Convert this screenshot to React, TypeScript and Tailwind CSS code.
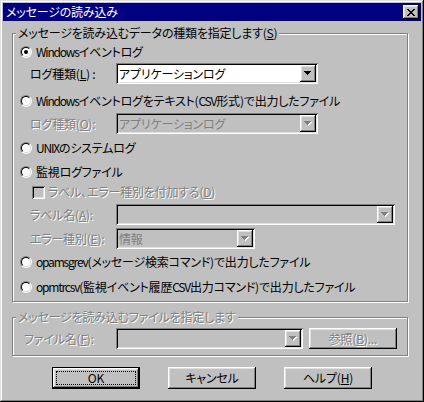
import React from 'react';

const raised =
  'shadow-[inset_-1px_-1px_0_#000,inset_1px_1px_0_#fff,inset_-2px_-2px_0_#808080,inset_2px_2px_0_#dfdfdf]';
const sunken =
  'shadow-[inset_1px_1px_0_#808080,inset_-1px_-1px_0_#fff,inset_2px_2px_0_#000,inset_-2px_-2px_0_#dfdfdf]';
const dim = 'text-[#808080] [text-shadow:1px_1px_0_#fff]';

// latin runs are narrower in the original UI font
function T({ children }: { children: string }) {
  const parts = children.split(/([A-Za-z]+)/);
  return (
    <>
      {parts.map((p, i) =>
        /^[A-Za-z]+$/.test(p) ? (
          <span key={i} className="tracking-[-1.2px]">
            {p}
          </span>
        ) : (
          p
        ),
      )}
    </>
  );
}

function Arrow({ disabled }: { disabled?: boolean }) {
  const rows = [
    [0, 7],
    [1, 5],
    [2, 3],
    [3, 1],
  ];
  return (
    <svg width="8" height="5" shapeRendering="crispEdges">
      {disabled &&
        rows.map(([y, w]) => <rect key={'s' + y} x={y + 1} y={y + 1} width={w} height={1} fill="#fff" />)}
      {rows.map(([y, w]) => (
        <rect key={y} x={y} y={y} width={w} height={1} fill={disabled ? '#808080' : '#000'} />
      ))}
    </svg>
  );
}

function CloseGlyph() {
  const px = [
    [0, 0], [1, 0], [6, 0], [7, 0],
    [1, 1], [2, 1], [5, 1], [6, 1],
    [2, 2], [3, 2], [4, 2], [5, 2],
    [3, 3], [4, 3],
    [2, 4], [3, 4], [4, 4], [5, 4],
    [1, 5], [2, 5], [5, 5], [6, 5],
    [0, 6], [1, 6], [6, 6], [7, 6],
  ];
  return (
    <svg width="8" height="7" shapeRendering="crispEdges">
      {px.map(([x, y]) => (
        <rect key={x + '-' + y} x={x} y={y} width={1} height={1} fill="#000" />
      ))}
    </svg>
  );
}

function Combo({ w, value, disabled }: { w: string; value?: string; disabled?: boolean }) {
  return (
    <div className={`flex h-[21px] p-[2px] ${w} ${disabled ? 'bg-[#c0c0c0]' : 'bg-white'} ${sunken}`}>
      <div
        className={`flex flex-1 items-center overflow-hidden whitespace-nowrap pl-[1px] leading-[14px] ${
          disabled ? 'text-[#808080]' : 'text-black'
        }`}
      >
        {value}
      </div>
      <div className={`flex w-[16px] items-center justify-center bg-[#c0c0c0] ${raised}`}>
        <Arrow disabled={disabled} />
      </div>
    </div>
  );
}

function Radio({ checked }: { checked?: boolean }) {
  return (
    <span className="flex h-[12px] w-[12px] shrink-0 rounded-full border border-t-[#808080] border-l-[#808080] border-b-white border-r-white">
      <span className="flex h-[10px] w-[10px] items-center justify-center rounded-full border border-t-black border-l-black border-b-[#dfdfdf] border-r-[#dfdfdf] bg-white">
        {checked && <span className="h-[4px] w-[4px] rounded-full bg-black" />}
      </span>
    </span>
  );
}

function RadioRow({ label, checked, mt }: { label: string; checked?: boolean; mt: string }) {
  return (
    <div className={`flex h-[16px] items-center gap-[4px] pl-[7px] ${mt}`}>
      <Radio checked={checked} />
      <span className="whitespace-nowrap leading-[14px]">
        <T>{label}</T>
      </span>
    </div>
  );
}

function Group({ label, disabled, className, children }: { label: React.ReactNode; disabled?: boolean; className: string; children: React.ReactNode }) {
  return (
    <div
      className={`relative w-[396px] border border-[#808080] shadow-[1px_1px_0_#fff,inset_1px_1px_0_#fff] ${className}`}
    >
      <span
        className={`absolute -top-[8px] left-[3px] whitespace-nowrap bg-[#c0c0c0] px-[2px] leading-[14px] ${
          disabled ? dim : ''
        }`}
      >
        {label}
      </span>
      {children}
    </div>
  );
}

function Button({ children, isDefault, disabled, w = 'w-[88px]', h = 'h-[22px]' }: { children: React.ReactNode; isDefault?: boolean; disabled?: boolean; w?: string; h?: string }) {
  return (
    <div
      className={`flex ${w} ${h} bg-[#c0c0c0] ${raised} ${isDefault ? 'border border-black p-[3px]' : 'p-[4px]'} ${
        disabled ? dim : ''
      }`}
    >
      <div
        className={`flex flex-1 items-center justify-center leading-[14px] ${
          isDefault ? 'border border-dotted border-black' : ''
        }`}
      >
        {children}
      </div>
    </div>
  );
}

export default function App() {
  return (
    <div className="h-[402px] w-[424px] bg-[#c0c0c0] p-[3px] font-['Noto_Sans_CJK_JP',sans-serif] text-[12px] tracking-[-0.2px] text-black [font-feature-settings:'palt'] shadow-[inset_-1px_-1px_0_#000,inset_1px_1px_0_#dfdfdf,inset_-2px_-2px_0_#808080,inset_2px_2px_0_#fff]">
      {/* title bar */}
      <div className="flex h-[18px] items-center justify-between bg-[#000080] pl-[3px] pr-[2px]">
        <span className="leading-[14px] text-white">メッセージの読み込み</span>
        <div className={`flex h-[14px] w-[16px] items-center justify-center bg-[#c0c0c0] ${raised}`}>
          <CloseGlyph />
        </div>
      </div>

      <div className="flex flex-col px-[9px]">
        <Group
          label={
            <>
              メッセージを読み込むデータの種類を指定します(<u>S</u>)
            </>
          }
          className="mt-[12px] pt-[10px] pb-[6px]"
        >
          <RadioRow label="Windowsイベントログ" checked mt="mt-0" />
          <div className="mt-[3px] flex items-center">
            <span className="ml-[17px] w-[86px] whitespace-nowrap leading-[14px]">
              ログ種類(<u>L</u>) :
            </span>
            <Combo w="w-[202px]" value="アプリケーションログ" />
          </div>

          <RadioRow label="Windowsイベントログをテキスト(CSV形式)で出力したファイル" mt="mt-[9px]" />
          <div className="mt-[4px] flex items-center">
            <span className={`ml-[17px] w-[86px] whitespace-nowrap leading-[14px] ${dim}`}>
              ログ種類(<u>O</u>):
            </span>
            <Combo w="w-[202px]" value="アプリケーションログ" disabled />
          </div>

          <RadioRow label="UNIXのシステムログ" mt="mt-[6px]" />
          <RadioRow label="監視ログファイル" mt="mt-[8px]" />

          <div className="mt-[4px] flex h-[16px] items-center gap-[3px] pl-[19px]">
            <span className={`h-[13px] w-[13px] bg-[#c0c0c0] ${sunken}`} />
            <span className={`whitespace-nowrap leading-[14px] ${dim}`}>
              ラベル、エラー種別を付加する(<u>D</u>)
            </span>
          </div>

          <div className="mt-[4px] flex items-center">
            <span className={`ml-[17px] w-[86px] whitespace-nowrap leading-[14px] ${dim}`}>
              ラベル名(<u>A</u>):
            </span>
            <Combo w="w-[279px]" disabled />
          </div>
          <div className="mt-[3px] flex items-center">
            <span className={`ml-[17px] w-[86px] whitespace-nowrap leading-[14px] ${dim}`}>
              エラー種別(<u>E</u>):
            </span>
            <Combo w="w-[139px]" value="情報" disabled />
          </div>

          <RadioRow label="opamsgrev(メッセージ検索コマンド)で出力したファイル" mt="mt-[5px]" />
          <RadioRow label="opmtrcsv(監視イベント履歴CSV出力コマンド)で出力したファイル" mt="mt-[9px]" />
        </Group>

        <Group label="メッセージを読み込むファイルを指定します" disabled className="mt-[15px] pt-[10px] pb-[6px]">
          <div className="flex items-center">
            <span className={`ml-[11px] w-[92px] whitespace-nowrap leading-[14px] ${dim}`}>
              ファイル名(<u>F</u>):
            </span>
            <Combo w="w-[187px]" disabled />
            <div className="ml-[6px]">
              <Button disabled h="h-[21px]">
                参照(<u>B</u>)...
              </Button>
            </div>
          </div>
        </Group>

        <div className="mt-[11px] flex justify-center gap-[28px]">
          <Button isDefault>OK</Button>
          <Button>キャンセル</Button>
          <Button>
            ヘルプ(<u>H</u>)
          </Button>
        </div>
      </div>
    </div>
  );
}
